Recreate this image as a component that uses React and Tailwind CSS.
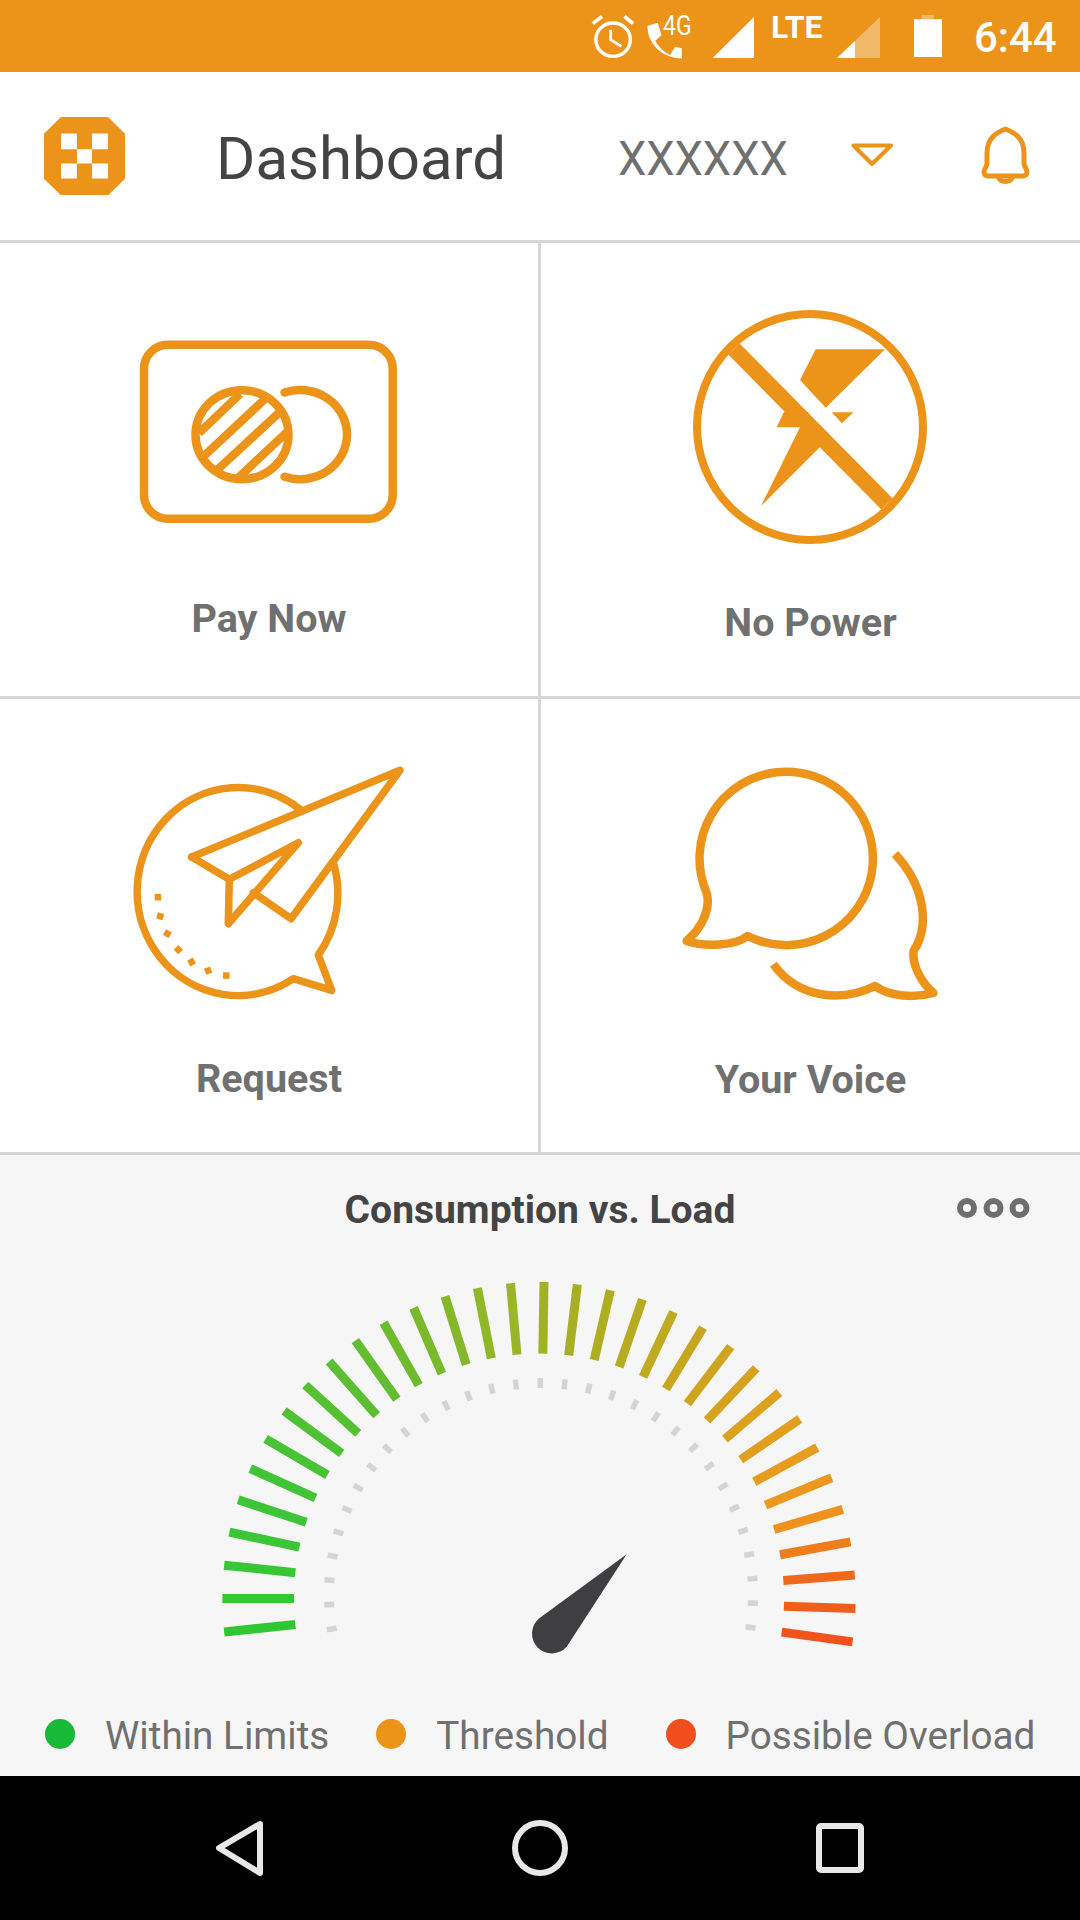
import React from "react";

const O = "#ec9319";

function lerp(stops, t) {
  for (let i = 1; i < stops.length; i++) {
    if (t <= stops[i][0]) {
      const [t0, c0] = stops[i - 1];
      const [t1, c1] = stops[i];
      const k = (t - t0) / (t1 - t0);
      return `rgb(${c0.map((v, j) => Math.round(v + (c1[j] - v) * k)).join(",")})`;
    }
  }
  return "rgb(240,84,28)";
}

const tickStops = [
  [0, [47, 200, 50]],
  [5, [66, 196, 56]],
  [10, [99, 189, 48]],
  [15, [154, 181, 38]],
  [18, [174, 174, 32]],
  [22, [207, 165, 32]],
  [26, [232, 156, 29]],
  [28, [239, 146, 29]],
  [29, [240, 125, 27]],
  [30, [240, 104, 27]],
  [32, [240, 84, 28]],
];

function Gauge() {
  const cx = 539;
  const cy = 1598.6;
  const outer = [];
  for (let i = 0; i < 33; i++) {
    const a = ((-6.06 + i * 6.06) * Math.PI) / 180;
    const c = Math.cos(a);
    const s = Math.sin(a);
    outer.push(
      <line key={i} x1={cx - 245 * c} y1={cy - 245 * s} x2={cx - 316.6 * c} y2={cy - 316.6 * s} stroke={lerp(tickStops, i)} strokeWidth="9" />
    );
  }
  const inner = [];
  for (let i = 0; i < 31; i++) {
    const a = ((-9.2 + i * 6.6) * Math.PI) / 180;
    const c = Math.cos(a);
    const s = Math.sin(a);
    inner.push(
      <line key={i} x1={541 - 207 * c} y1={1595 - 207 * s} x2={541 - 217 * c} y2={1595 - 217 * s} stroke="#d4d4d4" strokeWidth="5.5" />
    );
  }
  return (
    <svg className="block" width="680" height="400" viewBox="200 1270 680 400">
      {outer}
      {inner}
      <path d="M626.7 1554.3 L539.3 1618.3 A19.8 19.8 0 1 0 566.7 1646.7 Z" fill="#3f3f41" />
    </svg>
  );
}

function Cell({ children, label, labelClass, rightBorder, bottomBorder }) {
  return (
    <div className={`flex h-[456px] flex-col items-center ${rightBorder ? "border-r-[3px] border-[#d6d6d6]" : ""} ${bottomBorder ? "border-b-[3px] border-[#d6d6d6]" : ""}`}>
      {children}
      <span className={`text-[39.5px] leading-none font-bold text-[#707070] ${labelClass}`}>{label}</span>
    </div>
  );
}

function Legend({ color, label, dotClass, labelClass }) {
  return (
    <>
      <span className={`mt-[4px] h-[30px] w-[30px] shrink-0 rounded-full ${dotClass}`} style={{ background: color }} />
      <span className={`mt-[2px] text-[38.7px] leading-none whitespace-nowrap text-[#707070] ${labelClass}`}>{label}</span>
    </>
  );
}

export default function App() {
  return (
    <div className="flex h-[1920px] w-[1080px] flex-col overflow-hidden bg-white font-['Roboto',sans-serif]">
      {/* status bar */}
      <div className="flex h-[72px] shrink-0 items-start bg-[#ec9319] pl-[590px] text-white">
        <svg className="mt-[13.3px] shrink-0" width="46.5" height="46.7" viewBox="145 40 135 140" preserveAspectRatio="none" fill="none" stroke="#fff">
          <circle cx="212" cy="120" r="50" strokeWidth="10" />
          <path d="M153 72 L180 50 M245 50 L270 72" strokeWidth="11" />
          <path d="M205 90 L205 120 L236 140" strokeWidth="8" />
        </svg>
        <div className="relative ml-[8.5px] h-[42px] w-[40px] shrink-0">
          <svg className="mt-[20px]" width="39.6" height="40" viewBox="305 60 115 120" preserveAspectRatio="none" fill="#fff">
            <path d="M312 78 L342 68 L353 106 L335 122 C345 142 360 155 378 165 L392 140 L412 145 L412 175 C352 175 312 128 312 78 Z" />
          </svg>
          <span className="absolute top-[13.2px] left-[18px] origin-left scale-x-[0.85] text-[27px] leading-none">4G</span>
        </div>
        <svg className="mt-[16.7px] ml-[26.5px] shrink-0" width="42" height="41.6" viewBox="0 0 42 43" preserveAspectRatio="none">
          <path d="M0 43 L42 43 L42 0 Z" fill="#fff" />
        </svg>
        <span className="mt-[10.8px] ml-[17.5px] w-[51px] shrink-0 text-[32px] leading-none font-bold whitespace-nowrap">LTE</span>
        <svg className="mt-[17.3px] ml-[15px] shrink-0" width="43" height="41" viewBox="0 0 43 42" preserveAspectRatio="none">
          <path d="M0 42 L43 42 L43 0 Z" fill="#fff" fillOpacity="0.35" />
          <path d="M0 42 L18 42 L18 24.5 Z" fill="#fff" />
        </svg>
        <svg className="mt-[14.7px] ml-[34px] shrink-0" width="28" height="42.6" viewBox="0 0 28 42.6">
          <path d="M7.5 0 H20 V4.3 H7.5 Z" fill="#fff" fillOpacity="0.35" />
          <path d="M0 4.3 H28 V42.6 H0 Z" fill="#fff" />
        </svg>
        <span className="mt-[17px] ml-[32px] text-[42px] leading-none font-medium whitespace-nowrap">6:44</span>
      </div>

      {/* header */}
      <div className="flex h-[171px] shrink-0 items-start border-b-[3px] border-[#d6d6d6] pl-[44px]">
        <svg className="mt-[44.7px] shrink-0" width="81" height="78.4" viewBox="0 0 81 78.4">
          <path d="M17 0 H64 L81 16.7 V61.7 L64 78.4 H17 L0 61.7 V16.7 Z" fill={O} />
          <path d="M17 16.6 H33 V32.3 H17 Z M48 16.6 H64 V32.3 H48 Z M33 32.3 H48 V46.6 H33 Z M17 46.6 H33 V61.6 H17 Z M48 46.6 H64 V61.6 H48 Z" fill="#fff" />
        </svg>
        <span className="mt-[56.5px] ml-[91px] w-[290px] shrink-0 text-[60px] leading-none whitespace-nowrap text-[#444444]">Dashboard</span>
        <span className="mt-[62.5px] ml-[112px] w-[187px] shrink-0 origin-left scale-x-[0.94] text-[48px] leading-none whitespace-nowrap text-[#707070]">XXXXXX</span>
        <svg className="mt-[71px] ml-[45px] shrink-0" width="46" height="28" viewBox="850 143 46 28" fill="none" stroke={O} strokeWidth="4" strokeLinejoin="round">
          <path d="M853.5 145.5 H891 L872 164 Z" />
        </svg>
        <svg className="mt-[52px] ml-[84px] shrink-0" width="50" height="64" viewBox="980 129 50 64" fill="none" stroke={O} strokeWidth="5" strokeLinejoin="round">
          <path d="M1005.5 134 C1013 137 1024 142 1024 158 L1024 168 C1024 172 1027 174 1027 177 C1027 180 1025 181 1023 181 H988 C986 181 984 180 984 177 C984 174 987 172 987 168 L987 158 C987 142 998 137 1005.5 134 Z" />
          <path d="M999 182 C999 188 1012 188 1012 182" />
        </svg>
      </div>

      {/* grid */}
      <div className="grid shrink-0 grid-cols-[541px_539px]">
        <Cell rightBorder bottomBorder label="Pay Now" labelClass="mt-[71px]">
          <svg className="mt-[95px]" width="262" height="190" viewBox="138 338 262 190" fill="none" stroke={O} strokeWidth="8.5">
            <rect x="144" y="344.7" width="248.7" height="174" rx="24" />
            <ellipse cx="242" cy="434.7" rx="46.5" ry="44.5" />
            <path d="M284.5 392.5 A47 44.6 0 1 1 284.5 476.7" strokeLinecap="round" />
            <path d="M199 433 L240 394 M204 456 L265 399 M216 471 L282 410 M238 478 L287 432" />
          </svg>
        </Cell>
        <Cell bottomBorder label="No Power" labelClass="mt-[56px]">
          <svg className="mt-[63.5px] mr-[2px]" width="240" height="240" viewBox="690 307 240 240" fill="none">
            <circle cx="810" cy="427" r="113" stroke={O} strokeWidth="8" />
            <path d="M734 349 L887 504" stroke={O} strokeWidth="16" />
            <path d="M815.7 349.3 H885 L825.7 407.7 L800 380 Z M831.7 412.3 H853.3 L842 423.3 Z M784 411.7 L776.7 427.3 H800 L761 506 L822 445 L808 412 Z" fill={O} />
          </svg>
        </Cell>
        <Cell rightBorder bottomBorder label="Request" labelClass="mt-[53px]">
          <svg className="mt-[66.7px] ml-[2px]" width="280" height="240" viewBox="130 765 280 240" fill="none" stroke={O} strokeWidth="7.5" strokeLinejoin="round" strokeLinecap="round">
            <path d="M300 808.3 A101 104 0 1 0 293.3 977.7 L331.7 989.3 L318.3 954 A101 104 0 0 0 333.3 861.7" />
            <path d="M191.7 856 L400 769.3 L291 917.7 L253.3 891.7" />
            <path d="M191.7 856 L229.3 878.3 L298.3 841.7 L228.3 922.7 L229.3 878.3" />
            <g stroke="none" fill={O}>
              <rect x="154.7" y="893" width="6.5" height="6.5" />
              <rect x="157" y="912" width="6.5" height="6.5" transform="rotate(15 160 915)" />
              <rect x="164.3" y="929.3" width="6.5" height="6.5" transform="rotate(30 167.3 932.3)" />
              <rect x="175.3" y="945.3" width="6.5" height="6.5" transform="rotate(45 178.3 948.3)" />
              <rect x="188.7" y="957.7" width="6.5" height="6.5" transform="rotate(60 191.7 960.7)" />
              <rect x="205.3" y="966.3" width="6.5" height="6.5" transform="rotate(70 208.3 969.3)" />
              <rect x="223" y="971.3" width="6.5" height="6.5" />
            </g>
          </svg>
        </Cell>
        <Cell bottomBorder label="Your Voice" labelClass="mt-[54px]">
          <svg className="mt-[66.7px] mr-[1px]" width="260" height="240" viewBox="680 765 260 240" fill="none" stroke={O} strokeWidth="8.5" strokeLinejoin="round">
            <path d="M706.3 891 C711 905 704 925 686.7 940 C705 946 735 945 747.5 935 A86.7 86.7 0 1 0 706.3 891 Z" />
            <path d="M895 853 C925 885 930 925 913.5 950 C912 965 922 982 933.3 992 C915 997 890 996 875 985 C845 1000 800 1000 773.3 963.3" />
          </svg>
        </Cell>
      </div>

      {/* consumption panel */}
      <div className="relative flex h-[621px] shrink-0 flex-col items-center bg-[#f6f6f6]">
        <span className="mt-[35.5px] text-[39px] leading-none font-bold text-[#444444]">Consumption vs. Load</span>
        <svg className="absolute top-[40px] left-[954.7px]" width="80" height="26" viewBox="0 0 80 26" fill="none" stroke="#6e6e6e" strokeWidth="6">
          <circle cx="12" cy="13" r="7" />
          <circle cx="38.5" cy="13" r="7" />
          <circle cx="64.5" cy="13" r="7" />
        </svg>
        <div className="mt-[40.5px] flex w-full justify-start pl-[200px]">
          <Gauge />
        </div>
        <div className="mt-[45px] flex w-full items-start pl-[45px]">
          <Legend color="#17b937" label="Within Limits" labelClass="ml-[30px]" />
          <Legend color="#ec9319" label="Threshold" dotClass="ml-[47px]" labelClass="ml-[30px]" />
          <Legend color="#f04e1c" label="Possible Overload" dotClass="ml-[57px]" labelClass="ml-[30px]" />
        </div>
      </div>

      {/* nav bar */}
      <div className="flex flex-1 items-center justify-center bg-black">
        <svg width="1080" height="144" viewBox="0 1776 1080 144" fill="none" stroke="#e8e8e8" strokeWidth="6" strokeLinejoin="round">
          <path d="M260 1824 L219 1848 L260 1873 Z" />
          <circle cx="540" cy="1848" r="25" />
          <rect x="819" y="1826" width="42" height="44" rx="2" />
        </svg>
      </div>
    </div>
  );
}
